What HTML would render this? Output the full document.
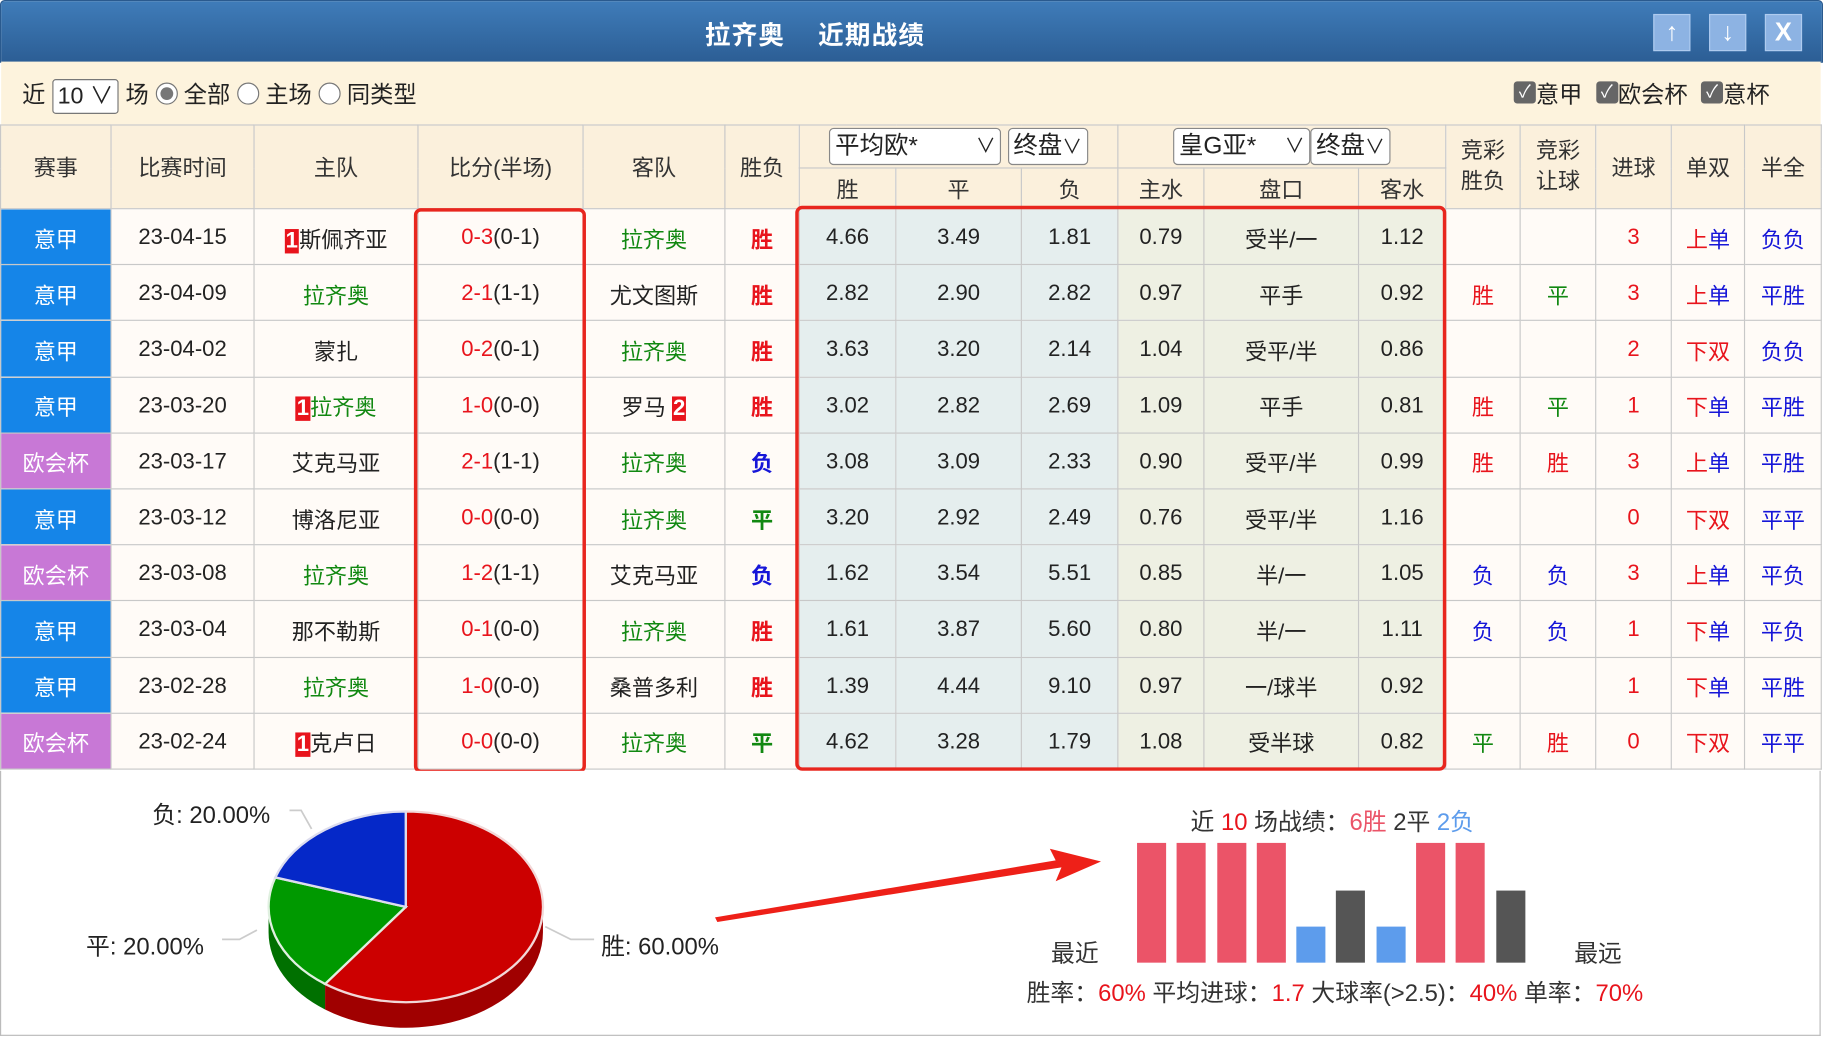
<!DOCTYPE html>
<html><head><meta charset="utf-8">
<style>
html,body{margin:0;padding:0;background:#fff;overflow:hidden}
#w{position:absolute;left:0;top:0;width:1568px;height:894px;transform:scale(1.16263);transform-origin:0 0;font-family:"Liberation Sans","Noto Sans CJK SC",sans-serif;color:#222}
.title{position:absolute;left:0;top:0;width:1566px;height:52px;background:linear-gradient(#3f7cb9,#2c5e95);border:1px solid #2a5a8e;border-radius:4px 4px 0 0}
.title .t{position:absolute;left:0;width:1400px;text-align:center;top:12px;color:#fff;font-weight:bold;font-size:22px;letter-spacing:1px}
.btn{position:absolute;top:11px;width:30px;height:30px;background:#8db3e3;border:1px solid #aecbef;color:#fff;font-size:22px;text-align:center;line-height:30px;font-weight:bold}
.fil{position:absolute;left:1px;top:53px;width:1565px;height:54px;background:#fdf3dd;font-size:20px}
.sel{display:inline-block;border:1px solid #777;border-radius:3px;background:#fff;padding:0 4px;height:28px;line-height:28px;vertical-align:middle}
.rad{display:inline-block;width:17px;height:17px;border:1px solid #777;border-radius:50%;background:#fff;vertical-align:middle;position:relative;top:-2px}
.rad.on:after{content:"";position:absolute;left:3px;top:3px;width:11px;height:11px;border-radius:50%;background:#777}
.cb{display:inline-block;width:19px;height:19px;background:#666;border-radius:3px;color:#fff;font-size:15px;line-height:19px;text-align:center;vertical-align:middle;position:relative;top:-3px}
table{position:absolute;left:0;top:107px;border-collapse:collapse;table-layout:fixed;width:1566px;font-size:19px}
td{border:1px solid #c8c8c8;text-align:center;padding:0;overflow:hidden;white-space:nowrap;background:#fffbf7}
thead td{background:#fbf0dc;color:#333}
.h1 td{height:36px}.h2 td{height:34px}
tbody td{height:44.2px;padding-top:3px}
.y{background:#1585e8!important;color:#fff}
.o{background:#c878d6!important;color:#fff}
.e{background:#e5eeee!important}
.a{background:#eef0e3!important}
.g{color:#118811}.r{color:#e8141c}.b{color:#1616d8}
.wb{font-weight:bold}
.n{background:#e8141c;color:#fff;font-weight:bold;padding:0 1px}
.hs{display:inline-block;border:1px solid #888;border-radius:4px;background:#fff;height:30px;line-height:30px;padding:0 4px;text-align:left;font-size:21px;color:#222;position:relative}
.box{position:absolute;border:3px solid #e8261e;border-radius:6px}
.bot{position:absolute;left:0;top:663px;width:1564px;height:227px;border:1px solid #bbb;border-top:none;background:#fff}
.lbl{position:absolute;font-size:20.5px;color:#222}
</style></head><body><div id="w">
<div class="title"><div class="t">拉齐奥&nbsp;&nbsp;&nbsp;&nbsp;近期战绩</div>
<div class="btn" style="left:1421px">↑</div><div class="btn" style="left:1469px">↓</div><div class="btn" style="left:1517px">X</div></div>
<div class="fil"><div style="position:absolute;left:18px;top:12px">近 <span class="sel">10 ∨</span> 场 <span class="rad on"></span> 全部 <span class="rad"></span> 主场 <span class="rad"></span> 同类型</div>
<div style="position:absolute;left:1301px;top:12px;word-spacing:6px"><span class="cb">✓</span>意甲 <span class="cb">✓</span>欧会杯 <span class="cb">✓</span>意杯</div></div>
<table>
<colgroup><col style="width:95px"><col style="width:123px"><col style="width:141px"><col style="width:142px"><col style="width:122px"><col style="width:64px"><col style="width:83px"><col style="width:108px"><col style="width:83px"><col style="width:74px"><col style="width:133px"><col style="width:75px"><col style="width:64px"><col style="width:65px"><col style="width:65px"><col style="width:63px"><col style="width:66px"></colgroup>
<thead>
<tr class="h1"><td rowspan="2">赛事</td><td rowspan="2">比赛时间</td><td rowspan="2">主队</td><td rowspan="2">比分(半场)</td><td rowspan="2">客队</td><td rowspan="2">胜负</td>
<td colspan="3"><span class="hs" style="width:138px">平均欧*<span style="position:absolute;right:4px;font-size:17px">∨</span></span> <span class="hs">终盘<span style="font-size:17px">∨</span></span></td>
<td colspan="3"><span class="hs" style="width:108px">皇G亚*<span style="position:absolute;right:4px;font-size:17px">∨</span></span><span class="hs">终盘<span style="font-size:17px">∨</span></span></td>
<td rowspan="2" style="line-height:26px">竞彩<br>胜负</td><td rowspan="2" style="line-height:26px">竞彩<br>让球</td><td rowspan="2">进球</td><td rowspan="2">单双</td><td rowspan="2">半全</td></tr>
<tr class="h2"><td>胜</td><td>平</td><td>负</td><td>主水</td><td>盘口</td><td>客水</td></tr>
</thead>
<tbody>
<tr><td class="y">意甲</td><td>23-04-15</td><td><span class="n">1</span>斯佩齐亚</td><td><span class="r">0-3</span>(0-1)</td><td class="g">拉齐奥</td><td class="r wb">胜</td><td class="e">4.66</td><td class="e">3.49</td><td class="e">1.81</td><td class="a">0.79</td><td class="a">受半/一</td><td class="a">1.12</td><td></td><td></td><td class="r">3</td><td><span class="r">上</span><span class="b">单</span></td><td class="b">负负</td></tr>
<tr><td class="y">意甲</td><td>23-04-09</td><td class="g">拉齐奥</td><td><span class="r">2-1</span>(1-1)</td><td>尤文图斯</td><td class="r wb">胜</td><td class="e">2.82</td><td class="e">2.90</td><td class="e">2.82</td><td class="a">0.97</td><td class="a">平手</td><td class="a">0.92</td><td class="r">胜</td><td class="g">平</td><td class="r">3</td><td><span class="r">上</span><span class="b">单</span></td><td class="b">平胜</td></tr>
<tr><td class="y">意甲</td><td>23-04-02</td><td>蒙扎</td><td><span class="r">0-2</span>(0-1)</td><td class="g">拉齐奥</td><td class="r wb">胜</td><td class="e">3.63</td><td class="e">3.20</td><td class="e">2.14</td><td class="a">1.04</td><td class="a">受平/半</td><td class="a">0.86</td><td></td><td></td><td class="r">2</td><td class="r">下双</td><td class="b">负负</td></tr>
<tr><td class="y">意甲</td><td>23-03-20</td><td class="g"><span class="n">1</span>拉齐奥</td><td><span class="r">1-0</span>(0-0)</td><td>罗马 <span class="n">2</span></td><td class="r wb">胜</td><td class="e">3.02</td><td class="e">2.82</td><td class="e">2.69</td><td class="a">1.09</td><td class="a">平手</td><td class="a">0.81</td><td class="r">胜</td><td class="g">平</td><td class="r">1</td><td><span class="r">下</span><span class="b">单</span></td><td class="b">平胜</td></tr>
<tr><td class="o">欧会杯</td><td>23-03-17</td><td>艾克马亚</td><td><span class="r">2-1</span>(1-1)</td><td class="g">拉齐奥</td><td class="b wb">负</td><td class="e">3.08</td><td class="e">3.09</td><td class="e">2.33</td><td class="a">0.90</td><td class="a">受平/半</td><td class="a">0.99</td><td class="r">胜</td><td class="r">胜</td><td class="r">3</td><td><span class="r">上</span><span class="b">单</span></td><td class="b">平胜</td></tr>
<tr><td class="y">意甲</td><td>23-03-12</td><td>博洛尼亚</td><td><span class="r">0-0</span>(0-0)</td><td class="g">拉齐奥</td><td class="g wb">平</td><td class="e">3.20</td><td class="e">2.92</td><td class="e">2.49</td><td class="a">0.76</td><td class="a">受平/半</td><td class="a">1.16</td><td></td><td></td><td class="r">0</td><td class="r">下双</td><td class="b">平平</td></tr>
<tr><td class="o">欧会杯</td><td>23-03-08</td><td class="g">拉齐奥</td><td><span class="r">1-2</span>(1-1)</td><td>艾克马亚</td><td class="b wb">负</td><td class="e">1.62</td><td class="e">3.54</td><td class="e">5.51</td><td class="a">0.85</td><td class="a">半/一</td><td class="a">1.05</td><td class="b">负</td><td class="b">负</td><td class="r">3</td><td><span class="r">上</span><span class="b">单</span></td><td class="b">平负</td></tr>
<tr><td class="y">意甲</td><td>23-03-04</td><td>那不勒斯</td><td><span class="r">0-1</span>(0-0)</td><td class="g">拉齐奥</td><td class="r wb">胜</td><td class="e">1.61</td><td class="e">3.87</td><td class="e">5.60</td><td class="a">0.80</td><td class="a">半/一</td><td class="a">1.11</td><td class="b">负</td><td class="b">负</td><td class="r">1</td><td><span class="r">下</span><span class="b">单</span></td><td class="b">平负</td></tr>
<tr><td class="y">意甲</td><td>23-02-28</td><td class="g">拉齐奥</td><td><span class="r">1-0</span>(0-0)</td><td>桑普多利</td><td class="r wb">胜</td><td class="e">1.39</td><td class="e">4.44</td><td class="e">9.10</td><td class="a">0.97</td><td class="a">一/球半</td><td class="a">0.92</td><td></td><td></td><td class="r">1</td><td><span class="r">下</span><span class="b">单</span></td><td class="b">平胜</td></tr>
<tr><td class="o">欧会杯</td><td>23-02-24</td><td><span class="n">1</span>克卢日</td><td><span class="r">0-0</span>(0-0)</td><td class="g">拉齐奥</td><td class="g wb">平</td><td class="e">4.62</td><td class="e">3.28</td><td class="e">1.79</td><td class="a">1.08</td><td class="a">受半球</td><td class="a">0.82</td><td class="g">平</td><td class="r">胜</td><td class="r">0</td><td class="r">下双</td><td class="b">平平</td></tr>
</tbody></table>
<div class="box" style="left:356px;top:179px;width:142px;height:480px"></div>
<div class="box" style="left:684px;top:177px;width:554px;height:480px"></div>
<div class="bot">
<svg width="1564" height="227" viewBox="0 663 1564 227" style="position:absolute;left:0;top:0">
<path d="M466,780 A118,82 0 0 1 278.6,846.3 L278.6,868.3 A118,82 0 0 0 466,802 Z" fill="#a00000"/>
<path d="M230,780 A118,82 0 0 0 278.6,846.3 L278.6,868.3 A118,82 0 0 1 230,802 Z" fill="#007000"/>
<path d="M348,780 L348,698 A118,82 0 1 1 278.6,846.3 Z" fill="#cc0000" stroke="#f2d8d8" stroke-width="2"/>
<path d="M348,780 L278.6,846.3 A118,82 0 0 1 235.8,754.7 Z" fill="#009900" stroke="#e0f0e0" stroke-width="2"/>
<path d="M348,780 L235.8,754.7 A118,82 0 0 1 348,698 Z" fill="#0528c8" stroke="#dde" stroke-width="2"/>
<path d="M248,697 L258,697 L267,713 M190,808 L205,808 L220,800 M468,797 L490,808 L510,808" fill="none" stroke="#ccc" stroke-width="1.5"/>
<path d="M616,793 L912,746 L907,758 L946,741 L902,730 L907,740 L614,789 Z" fill="#ee2018"/>
<g fill="#eb5468"><rect x="977" y="725" width="25" height="103"/><rect x="1011" y="725" width="25" height="103"/><rect x="1046" y="725" width="25" height="103"/><rect x="1080" y="725" width="25" height="103"/><rect x="1217" y="725" width="25" height="103"/><rect x="1251" y="725" width="25" height="103"/></g>
<g fill="#5d9cec"><rect x="1114" y="797" width="25" height="31"/><rect x="1183" y="797" width="25" height="31"/></g>
<g fill="#555"><rect x="1148" y="766" width="25" height="62"/><rect x="1286" y="766" width="25" height="62"/></g>
</svg>
<div class="lbl" style="left:130px;top:21px">负: 20.00%</div>
<div class="lbl" style="left:73px;top:134px">平: 20.00%</div>
<div class="lbl" style="left:516px;top:134px">胜: 60.00%</div>
<div class="lbl" style="left:1023px;top:27px;color:#333">近 <span class="r">10</span> 场战绩：<span style="color:#eb5468">6胜</span> 2平 <span style="color:#5d9cec">2负</span></div>
<div class="lbl" style="left:903px;top:140px;color:#333">最近</div>
<div class="lbl" style="left:1353px;top:140px;color:#333">最远</div>
<div class="lbl" style="left:882px;top:174px;color:#333;font-size:20.5px">胜率：<span class="r">60%</span> 平均进球：<span class="r">1.7</span> 大球率(&gt;2.5)：<span class="r">40%</span> 单率：<span class="r">70%</span></div>
</div>
</div></body></html>
